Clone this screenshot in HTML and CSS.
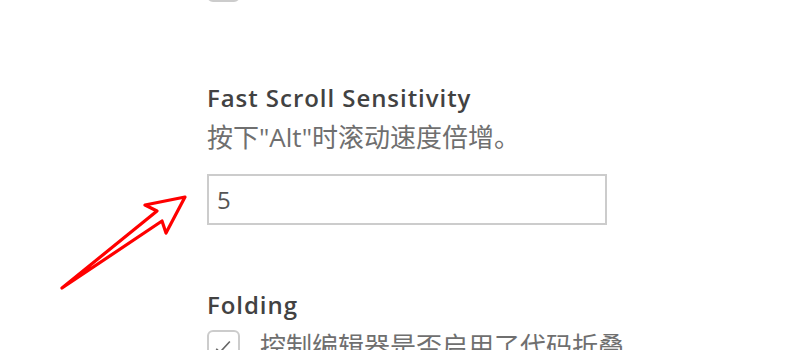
FILE: index.html
```html
<!DOCTYPE html>
<html lang="zh">
<head>
<meta charset="utf-8">
<link rel="stylesheet" href="styles.css">
</head>
<body>
<div class="page">
  <div class="prev-setting">
    <span class="checkbox"></span>
  </div>
  <div class="setting">
    <div class="setting-title">Fast Scroll Sensitivity</div>
    <div class="setting-desc">按下"Alt"时滚动速度倍增。</div>
    <input class="setting-input" type="text" value="5">
  </div>
  <div class="setting folding">
    <div class="setting-title">Folding</div>
    <label class="check-row">
      <span class="checkbox">
        <svg viewBox="0 0 32 32" width="30" height="30"><path d="M8 19 L12 23 L23 11" fill="none" stroke="#666" stroke-width="1.8"/></svg>
      </span>
      <span class="check-label">控制编辑器是否启用了代码折叠</span>
    </label>
  </div>
</div>
<svg class="arrow" width="800" height="350" viewBox="0 0 800 350">
  <path d="M62 288 L157 211 L145 205 L185 197 L166 233 L162 221 Z" fill="#fff" stroke="#ff0000" stroke-width="3.2" stroke-linejoin="round" stroke-linecap="round"/>
</svg>
</body>
</html>
```
FILE: styles.css
```css
html, body {
  margin: 0;
  padding: 0;
  background: #ffffff;
  overflow: hidden;
}
body {
  font-family: "Open Sans", "Noto Sans CJK SC", sans-serif;
  color: #444444;
  width: 800px;
  height: 350px;
  position: relative;
}
.page {
  padding-left: 207px;
}
.prev-setting {
  margin-top: -31px;
  height: 33px;
}
.checkbox {
  display: inline-flex;
  align-items: center;
  justify-content: center;
  box-sizing: border-box;
  width: 33px;
  height: 33px;
  border: 2px solid #cccccc;
  border-radius: 6px;
  background: #ffffff;
}
.setting {
  margin-top: 80px;
}
.setting-title {
  font-size: 24px;
  font-weight: 600;
  line-height: 32px;
  letter-spacing: 0.95px;
  color: #424242;
}
.setting-desc {
  font-size: 26px;
  line-height: 34px;
  margin-top: 6px;
  color: #6f6f6f;
}
.setting-input {
  display: block;
  box-sizing: border-box;
  width: 400px;
  height: 51px;
  margin-top: 20px;
  padding: 0 0 0 8px;
  border: 2px solid #cccccc;
  border-radius: 0;
  outline: none;
  font-family: "Open Sans", sans-serif;
  font-size: 24px;
  color: #555555;
  background: #ffffff;
}
.folding {
  margin-top: 64px;
}
.check-row {
  display: flex;
  align-items: center;
  gap: 20px;
  margin-top: 8px;
}
.check-label {
  font-size: 26px;
  line-height: 34px;
  color: #6f6f6f;
}
.arrow {
  position: absolute;
  left: 0;
  top: 0;
  pointer-events: none;
}
```
